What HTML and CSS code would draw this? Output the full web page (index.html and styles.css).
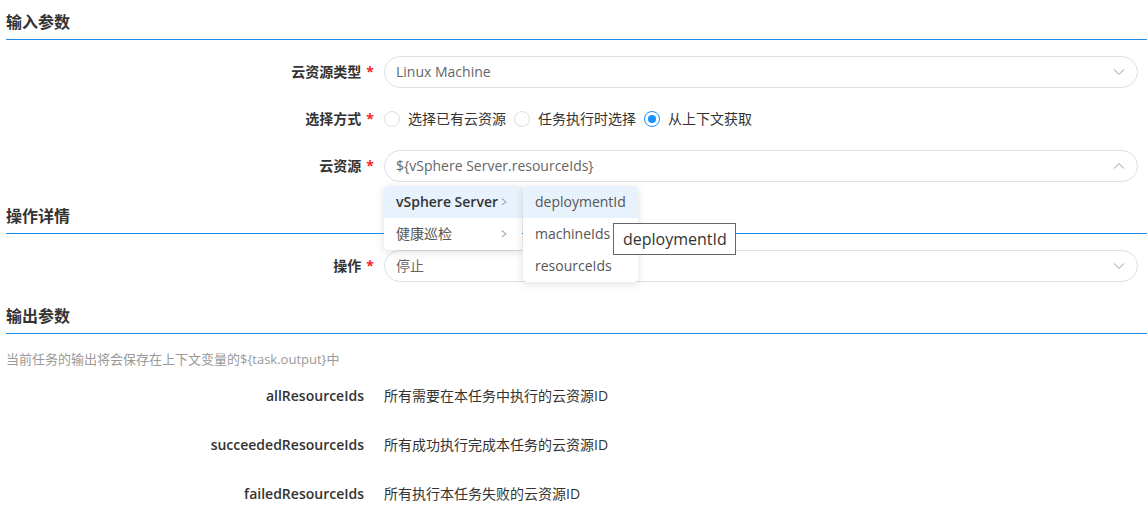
FILE: index.html
```html
<!DOCTYPE html>
<html lang="zh-CN">
<head>
<meta charset="utf-8">
<title>任务配置</title>
<link rel="stylesheet" href="styles.css">
</head>
<body>
<div class="page">
  <div class="section-head">输入参数</div>
  <div class="form">
    <div class="row">
      <div class="label">云资源类型<span class="star">*</span></div>
      <div class="control">
        <div class="select"><span class="value">Linux Machine</span>
          <svg class="chev" width="12" height="8" viewBox="0 0 12 8"><path d="M1 1.5 L6 6.5 L11 1.5" fill="none" stroke="#c0c4cc" stroke-width="1.2"/></svg>
        </div>
      </div>
    </div>
    <div class="row">
      <div class="label">选择方式<span class="star">*</span></div>
      <div class="control radios">
        <label class="radio"><span class="dot"></span><span>选择已有云资源</span></label>
        <label class="radio"><span class="dot"></span><span>任务执行时选择</span></label>
        <label class="radio checked"><span class="dot"></span><span>从上下文获取</span></label>
      </div>
    </div>
    <div class="row">
      <div class="label">云资源<span class="star">*</span></div>
      <div class="control">
        <div class="select"><span class="value">${vSphere Server.resourceIds}</span>
          <svg class="chev" width="12" height="8" viewBox="0 0 12 8"><path d="M1 6.5 L6 1.5 L11 6.5" fill="none" stroke="#c0c4cc" stroke-width="1.2"/></svg>
        </div>
        <div class="cascader">
          <ul class="menu menu-left">
            <li class="item active bold"><span>vSphere Server</span><span class="arr">&gt;</span></li>
            <li class="item"><span>健康巡检</span><span class="arr">&gt;</span></li>
          </ul>
          <ul class="menu menu-right">
            <li class="item active">deploymentId</li>
            <li class="item">machineIds</li>
            <li class="item">resourceIds</li>
          </ul>
          <div class="tooltip">deploymentId</div>
        </div>
      </div>
    </div>
  </div>

  <div class="section-head">操作详情</div>
  <div class="form">
    <div class="row">
      <div class="label">操作<span class="star">*</span></div>
      <div class="control">
        <div class="select"><span class="value">停止</span>
          <svg class="chev" width="12" height="8" viewBox="0 0 12 8"><path d="M1 1.5 L6 6.5 L11 1.5" fill="none" stroke="#c0c4cc" stroke-width="1.2"/></svg>
        </div>
      </div>
    </div>
  </div>

  <div class="section-head">输出参数</div>
  <div class="desc">当前任务的输出将会保存在上下文变量的${task.output}中</div>
  <div class="outputs">
    <div class="orow"><div class="olabel">allResourceIds</div><div class="ovalue">所有需要在本任务中执行的云资源ID</div></div>
    <div class="orow"><div class="olabel">succeededResourceIds</div><div class="ovalue">所有成功执行完成本任务的云资源ID</div></div>
    <div class="orow"><div class="olabel">failedResourceIds</div><div class="ovalue">所有执行本任务失败的云资源ID</div></div>
  </div>
</div>
</body>
</html>
```

FILE: styles.css
```css
* { box-sizing: border-box; }
html, body { margin: 0; padding: 0; background: #fff; }
body {
  font-family: "Open Sans", "Noto Sans CJK SC", sans-serif;
  font-size: 14px;
  color: #333;
}
.page { padding-left: 6px; }
.section-head {
  font-size: 16px;
  font-weight: 700;
  color: #333;
  line-height: 24px;
  height: 40px;
  padding-top: 10px;
  border-bottom: 1px solid #1f8ceb;
}
.form {
  padding-right: 9px;
  display: flex;
  flex-direction: column;
  gap: 15px;
  margin-top: 16px;
  margin-bottom: 12px;
}
.row { display: flex; align-items: center; height: 32px; }
.label {
  width: 378px;
  padding-right: 10px;
  text-align: right;
  font-weight: 600;
  color: #333;
  line-height: 20px;
}
.star { color: #f5222d; margin-left: 5px; font-weight: 700; }
.control { flex: 1; position: relative; }
.select {
  height: 32px;
  border: 1px solid #dcdfe6;
  border-radius: 16px;
  display: flex;
  align-items: center;
  justify-content: space-between;
  padding: 0 12px 0 11px;
  color: #666;
}
.value { line-height: 20px; }
.chev { display: block; }
.radios { display: flex; align-items: center; }
.radio { display: flex; align-items: center; margin-right: 8px; color: #333; line-height: 20px; }
.radio .dot {
  width: 16px; height: 16px;
  border: 1px solid #dcdfe6;
  border-radius: 50%;
  margin-right: 8px;
  display: flex; align-items: center; justify-content: center;
}
.radio.checked .dot { border-color: #1890ff; }
.radio.checked .dot::after {
  content: "";
  width: 8px; height: 8px; border-radius: 50%; background: #1890ff;
}
.cascader {
  position: absolute;
  top: 36px;
  left: 0;
  display: flex;
  align-items: flex-start;
  z-index: 10;
}
.menu {
  list-style: none;
  margin: 0;
  padding: 0;
  background: #fff;
  border-radius: 4px;
  box-shadow: 0 2px 10px rgba(0,0,0,0.13);
  overflow: hidden;
}
.menu-left { width: 138px; }
.menu-right { width: 115px; margin-left: 1px; }
.item {
  height: 32px;
  line-height: 32px;
  padding: 0 12px;
  color: #555;
  display: flex;
  justify-content: space-between;
  white-space: nowrap;
}
.item.active { background: #e8f2fd; }
.item.bold { font-weight: 600; color: #333; }
.arr { color: #999; font-weight: 400; margin-right: 2px; transform: scaleX(0.7); }
.tooltip {
  position: absolute;
  left: 229px;
  top: 37px;
  height: 32px;
  padding: 0 8px 0 9px;
  border: 1px solid #666;
  background: #fff;
  color: #333;
  font-size: 16px;
  line-height: 30px;
  white-space: nowrap;
}
.desc {
  margin-top: 15px;
  font-size: 13px;
  line-height: 20px;
  color: #999;
}
.outputs {
  display: flex;
  flex-direction: column;
  gap: 17px;
  margin-top: 10px;
}
.orow { display: flex; align-items: center; height: 32px; }
.olabel {
  width: 378px;
  padding-right: 20px;
  text-align: right;
  font-weight: 600;
  color: #333;
}
.ovalue { color: #333; }
```
